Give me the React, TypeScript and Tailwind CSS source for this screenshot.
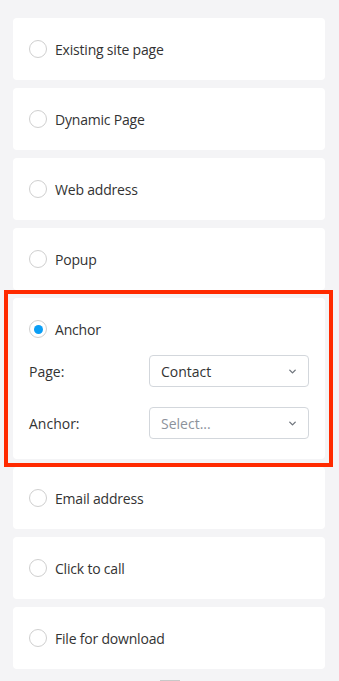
import { ChevronDown } from "lucide-react";

const options = [
  "Existing site page",
  "Dynamic Page",
  "Web address",
  "Popup",
  "Anchor",
  "Email address",
  "Click to call",
  "File for download",
];

const Radio = ({ checked }: { checked?: boolean }) => (
  <span className="flex h-[18px] w-[18px] shrink-0 items-center justify-center rounded-full border border-[#cfcfcf] bg-white">
    {checked && <span className="h-[9px] w-[9px] rounded-full bg-[#0a9ef5]" />}
  </span>
);

const SelectBox = ({ value, placeholder }: { value?: string; placeholder?: string }) => (
  <div className="flex h-[32px] w-[160px] items-center justify-between rounded border border-[#d3d7dc] bg-white pl-[11px] pr-[10px]">
    <span className={value ? "text-[#333]" : "text-[#8c929b]"}>{value ?? placeholder}</span>
    <ChevronDown className="h-[11px] w-[11px] text-[#6f757d]" strokeWidth={3} />
  </div>
);

export default function App() {
  return (
    <div
      className="min-h-[681px] bg-[#f4f4f6] px-[13px] pt-[18px] pb-3 text-[14px] text-[#333]"
      style={{ fontFamily: '"Open Sans", "Liberation Sans", sans-serif' }}
    >
      <div className="flex w-[312px] flex-col gap-2">
        {options.map((label) => {
          const active = label === "Anchor";
          return (
            <div key={label} className="relative rounded bg-white px-4 py-5">
              {active && (
                <div className="pointer-events-none absolute -top-2 -bottom-2 -left-[9px] -right-2 border-4 border-[#ff2a00]" />
              )}
              <div className="flex h-[22px] items-center gap-2">
                <Radio checked={active} />
                <span className="tracking-[-0.2px]">{label}</span>
              </div>
              {active && (
                <div className="mt-[15px] flex flex-col gap-5">
                  <div className="flex items-center justify-between">
                    <span>Page:</span>
                    <SelectBox value="Contact" />
                  </div>
                  <div className="flex items-center justify-between">
                    <span>Anchor:</span>
                    <SelectBox placeholder="Select..." />
                  </div>
                </div>
              )}
            </div>
          );
        })}
      </div>
      <div className="mx-auto mt-[11px] h-[4px] w-[20px] bg-[#c8c8c8]" />
    </div>
  );
}
